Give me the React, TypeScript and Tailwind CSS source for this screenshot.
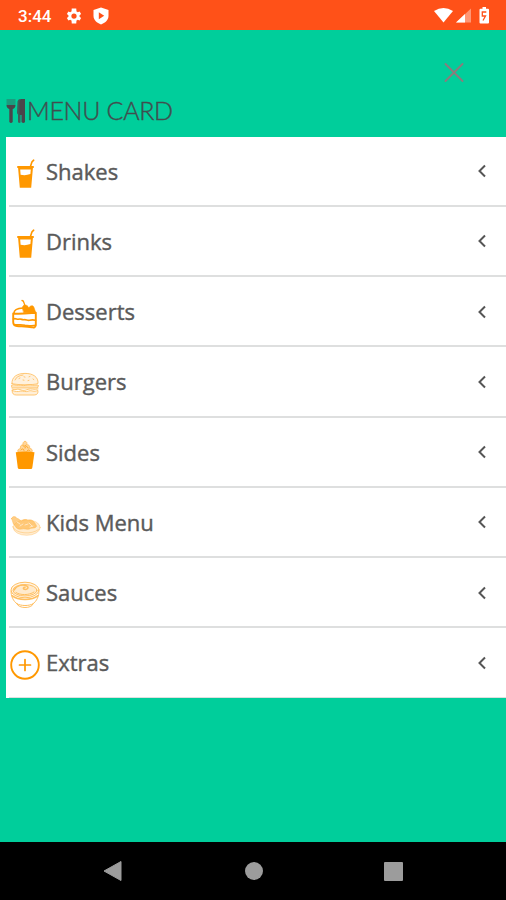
import React from 'react'

const menuItems = [
  { name: 'Shakes', icon: <DrinkIcon /> },
  { name: 'Drinks', icon: <DrinkIcon /> },
  { name: 'Desserts', icon: <CakeIcon /> },
  { name: 'Burgers', icon: <BurgerIcon /> },
  { name: 'Sides', icon: <BucketIcon /> },
  { name: 'Kids Menu', icon: <PlateIcon /> },
  { name: 'Sauces', icon: <BowlIcon /> },
  { name: 'Extras', icon: <PlusIcon /> },
]

function FoodIcon({ children }: { children: React.ReactNode }) {
  return (
    <svg
      viewBox="0 0 30 30"
      className="mt-1.5 size-[30px] shrink-0 overflow-visible"
      fill="none"
      stroke="#ff9800"
      strokeLinecap="round"
      strokeLinejoin="round"
    >
      {children}
    </svg>
  )
}

function DrinkIcon() {
  return (
    <FoodIcon>
      <path d="M20.6 7 22 2.8l1.7-1.6" strokeWidth="1.6" />
      <path d="M8 8h15" strokeWidth="2" />
      <path
        d="M8 8h15l-1.8 20.8H9.8zM10.2 10.5l.4 5.2q5 1.2 9.8-.7l.4-4.5z"
        fill="#ff9800"
        fillRule="evenodd"
        stroke="none"
      />
    </FoodIcon>
  )
}

function CakeIcon() {
  return (
    <FoodIcon>
      <path d="M4 14c0-3.500 3-4.600 9-5" strokeWidth="1.6" />
      <path d="M12.500 9.500c-.5-4 3.500-4.500 5.500-2l.8 1.500c1.200-2.500 4-3 5-1l2 5.800H14z" fill="#ff9800" strokeWidth=".6" />
      <path d="M12 1.500c2.600.2 1.600 3 3 5" strokeWidth="1.3" />
      <path
        d="M3.200 14.500c7 .8 15-.2 22.600-.8v12.500c-.3 2.300-2 2.800-4 2-5-.8-10-.8-15-1.200-2.600-.2-3.600-1.500-3.600-4z"
        strokeWidth="1.9"
      />
      <path d="M3.500 20c2-1 3.400.6 5.300.2 2-.8 3.200.8 5.200.5 2-.5 3.500 1 5.500.5s4-.5 6 0" strokeWidth="1.7" />
      <path d="M4 25.500c4 .8 7-.3 11 .8 4 .8 7 .3 10.500 0" strokeWidth="1.500" />
    </FoodIcon>
  )
}

function BurgerIcon() {
  return (
    <FoodIcon>
      <g opacity=".6" strokeWidth=".9">
        <path d="M2 14.500C1.500 8 7 4.400 15 4.400S28.500 8 28 14.500c-4 1.700-22 1.700-26 0z" fill="#ff9800" fillOpacity=".22" />
        <path d="M5 11c1-3 4-4.400 8-5M9 9.500l1-.5M14 7.800l1 .3M19 7.800l1-.4M23 10l.8.600M13 11l1 .2M18 11.600l1-.3" />
        <path d="M1.500 16.200c3-1.800 4 .8 7 0s4 1 7 .2 4-1 7-.2 4-1.200 6 .3l-1 2.500H2.600z" fill="#ff9800" fillOpacity=".45" />
        <path d="M2 20c3 2 5-.8 8 .5s5 1 8-.2 6 .9 10-.3" />
        <path d="M2.200 21.500c-.5 3 1.500 4.500 4 4.500h18c3 0 4.300-2 3.600-4.700-4 2.300-6-.4-9 .7-3 1.500-6-.3-8 0-3 1-5 .7-8.600-.5z" fill="#ff9800" fillOpacity=".25" />
      </g>
    </FoodIcon>
  )
}

function BucketIcon() {
  return (
    <FoodIcon>
      <path
        d="M8 12c-1-2.200 1-3.500 2.500-3.300C9.800 6 11.500 4.500 13 5c-.4-2 .5-3.500 2-3.800 1.800.3 2.400 2 1.600 3.500 2.200-.3 3.600 1.200 3 3.700 2.200 0 3.400 1.800 2.400 3.600z"
        fill="#ff9800"
        fillOpacity=".55"
        strokeWidth=".7"
        opacity=".7"
      />
      <path d="M11 10c1-2 3-1 3 .4M15 8c0-2 2.500-2.400 3 0M13 5.700c1 1 2 .5 2.800-.5M17 11c1-1.500 2-1.300 3 0" strokeWidth=".8" />
      <path d="M5.800 12.200q9.200-1.400 18.700 0l-2.200 15.500q-.2 1.300-1.400 1.300H9.300Q8 29 7.800 27.700z" fill="#ff9800" stroke="none" />
    </FoodIcon>
  )
}

function PlateIcon() {
  return (
    <FoodIcon>
      <g opacity=".72" strokeWidth=".7">
        <ellipse cx="16.700" cy="17.500" rx="13.500" ry="7.800" fill="#ff9800" fillOpacity=".25" strokeOpacity=".5" />
        <path d="M2.500 16.500C5 24 22 25 28.500 19.500" strokeOpacity=".6" />
        <path
          d="M1.500 8.500C3 5.500 6 6.500 7 8.500c2 .2 2.500 1.500 4.400 2.400 2.500-1.800 5.200-1.800 6.400-.4 3.200-1.500 6.600.4 8.800 5.700-1.800 3-5 1-7 2.700-3.300 1.200-5-1-8 .2-3 .5-5.500-.5-6.500-3.500C2.500 14.500 3.500 12 1.500 8.500z"
          fill="#ff9800"
          fillOpacity=".65"
          strokeOpacity=".7"
        />
        <path d="m7 12 3 2M10 16l3-2M15 15l3-1M19 13l3 3M20 17l3-1" stroke="#fff" strokeWidth=".9" strokeOpacity=".6" />
      </g>
    </FoodIcon>
  )
}

function BowlIcon() {
  return (
    <FoodIcon>
      <g opacity=".62" strokeWidth="1">
        <ellipse cx="15" cy="10" rx="14" ry="7.800" fill="#ff9800" fillOpacity=".15" />
        <ellipse cx="15" cy="10.300" rx="12" ry="5.700" fill="#ff9800" fillOpacity=".2" />
        <path d="M4 10c3-5 9-6 12.500-4.200 3 1.600 1 4-2 3.500-2-.5-1-2 .5-2" strokeWidth="1.500" />
        <path d="M6 12.500c4 2.800 13 3 18-.5" />
        <path d="M1 11c0 5 2 10 6.200 13M29 11c0 5-2 10-6.200 13" />
        <path d="M2 15.700c6 5 20 5 26 0" strokeWidth="1.500" />
        <path d="M7 23.800c1 5 15 5 16 0-4 2.300-12 2.300-16 0z" />
      </g>
    </FoodIcon>
  )
}

function PlusIcon() {
  return (
    <FoodIcon>
      <circle cx="15" cy="15" r="13.800" strokeWidth="1.900" />
      <path d="M15 9.500v11M9.500 15h11" strokeWidth="1.700" />
    </FoodIcon>
  )
}

function StatusBar() {
  return (
    <header className="flex h-[30px] shrink-0 items-center bg-[#ff5118] pl-[18px] pr-[15px] pt-px text-white">
      <span className="w-[47px] pt-px font-[Roboto] text-[17px] font-medium leading-none">3:44</span>
      <svg viewBox="0 0 24 24" className="size-[18px]" fill="currentColor">
        <path
          fillRule="evenodd"
          d="M19.400 13a7.500 7.500 0 0 0 0-2l2.100-1.600-2-3.500-2.500 1a7.500 7.500 0 0 0-1.700-1L15 2H9l-.3 3.900a7.500 7.500 0 0 0-1.700 1l-2.500-1-2 3.500L4.600 11a7.500 7.500 0 0 0 0 2l-2.100 1.600 2 3.500 2.500-1a7.500 7.500 0 0 0 1.700 1L9 22h6l.3-3.900a7.500 7.500 0 0 0 1.700-1l2.500 1 2-3.500zM12 15.500a3.500 3.500 0 1 1 0-7 3.500 3.500 0 0 1 0 7z"
        />
      </svg>
      <svg viewBox="0 0 16 18" className="ml-[10px] h-[18px] w-4">
        <path d="M8 .5 15.500 3v6c0 4-3.500 7-7.500 8.500C4 16 .5 13 .5 9V3z" fill="currentColor" />
        <path d="M5.800 5.200v7L11.200 8.700z" fill="#ff5118" />
      </svg>
      <svg viewBox="0 0 57 18" className="ml-auto h-[18px] w-[57px]" fill="currentColor">
        <path d="M0 4Q9.500-2 19 4L9.500 15.500z" />
        <path d="M22 15.500 37 1.500v14z" opacity=".4" />
        <path d="m22 15.500 9-8.500v8.500z" />
        <path d="M46.500 1.700h2V.1h3.500v1.600h2q1 0 1 1V15.500q0 1-1 1h-7.500q-1 0-1-1V2.700q0-1 1-1z" />
        <path d="M52.300 5h-4v4h3.200L49 13.500" fill="none" stroke="#ff5118" strokeWidth="1.300" />
      </svg>
    </header>
  )
}

function NavigationBar() {
  return (
    <footer className="flex h-[58px] shrink-0 items-center justify-between bg-black pl-[103px] pr-[103px] text-[#9c9c9c]">
      <svg viewBox="0 0 20 22" className="h-[22px] w-5" fill="currentColor">
        <path d="M1 11 18 1.500v19z" stroke="currentColor" strokeLinejoin="round" />
      </svg>
      <span className="size-[18px] rounded-full bg-[#9c9c9c]" />
      <span className="size-[19px] rounded-[1px] bg-[#9c9c9c]" />
    </footer>
  )
}

export default function App() {
  return (
    <div className="flex h-[900px] w-[506px] flex-col overflow-hidden bg-[#00ce9b] font-['Open_Sans',sans-serif]">
      <StatusBar />
      <main className="flex min-h-0 flex-1 flex-col pl-1.5">
        <div className="flex h-[53px] shrink-0 justify-end pr-[42px] pt-[33px]">
          <button aria-label="Close" className="size-5">
            <svg viewBox="0 0 20 20" fill="none" stroke="#8c7b7c" strokeWidth="1.800" strokeLinecap="round">
              <path d="m1.500 1 17 17M18.500 1l-17 17" />
            </svg>
          </button>
        </div>
        <h1 className="flex h-[53.5px] shrink-0 items-center pt-0.5 text-[#414d4e]">
          <svg viewBox="0 0 21 26" className="h-[26px] w-[21px]" fill="#4b454a">
            <path d="M.5 1h9v6h-9z" opacity=".35" />
            <path d="M.5 7h9q0 3-2.800 4v13q-1.700 2-3.400 0V11Q.5 10 .5 7z" />
            <path d="M11.500 3.500Q12 .6 14.500 1v23.500q-1.700 1-2.500-.5v-7.500q-1-.5-1-2z" opacity=".8" />
            <path d="M14.500 1h4.500v23q-1.500 1.800-3.500 0v-7h-2V4z" />
          </svg>
          <span className="font-[Lato] text-[25px] font-light leading-none tracking-[-0.3px] [-webkit-text-stroke:0.4px_#414d4e]">
            MENU CARD
          </span>
        </h1>
        <ul className="flex h-[561px] shrink-0 flex-col bg-white pl-[3px]">
          {menuItems.map((item) => (
            <li
              key={item.name}
              className="flex min-h-0 flex-1 items-center border-b-2 border-[#dedfdf] pl-px pr-[19px] last:border-b"
            >
              {item.icon}
              <span className="ml-1.5 flex-1 text-[22px] leading-none text-[#5a5a5a] [-webkit-text-stroke:0.4px_#5a5a5a]">
                {item.name}
              </span>
              <svg
                viewBox="0 0 10 14"
                className="mt-px h-3.5 w-2.5"
                fill="none"
                stroke="#555"
                strokeWidth="2"
              >
                <path d="M8 1.500 2.500 7 8 12.500" />
              </svg>
            </li>
          ))}
        </ul>
      </main>
      <NavigationBar />
    </div>
  )
}
